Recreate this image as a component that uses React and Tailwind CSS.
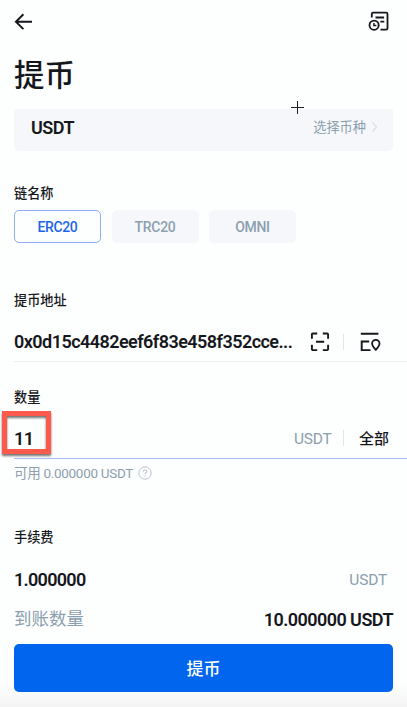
const NETWORKS = [
  { name: "ERC20", active: true },
  { name: "TRC20", active: false },
  { name: "OMNI", active: false },
];

function BackIcon() {
  return (
    <svg width="20" height="20" viewBox="0 0 20 20" fill="none" stroke="#15171c" strokeWidth="1.9">
      <path d="M9.4 2.3 1.9 9.7l7.5 7.5M2.1 9.700H18" />
    </svg>
  );
}

function HistoryIcon() {
  return (
    <svg width="22" height="22" viewBox="0 0 22 22" fill="none" stroke="#15171c" strokeWidth="1.8">
      <path d="M3.8 6.5V3q0-1.4 1.4-1.4h12.900q1.400 0 1.400 1.400v14.200q0 1.400-1.400 1.400h-5.600" />
      <path d="M7.500 6.500h8.600M12.300 10.700h4" />
      <circle cx="6.100" cy="14.200" r="4.600" />
      <path d="M5.900 11.900v2.600h2.500" strokeWidth="1.400" />
    </svg>
  );
}

function ScanIcon() {
  return (
    <svg width="20" height="20" viewBox="0 0 20 20" fill="none" stroke="#15171c" strokeWidth="1.900">
      <path d="M7.200 1.500H2.900q-1 0-1 1v4.300M12.800 1.500h4.300q1 0 1 1v4.300M18.100 12.800v4.300q0 1-1 1h-4.300M7.200 18.100H2.900q-1 0-1-1v-4.300M6 9.700h8.200" />
    </svg>
  );
}

function AddressBookIcon() {
  return (
    <svg width="22" height="20" viewBox="0 0 22 20" fill="none" stroke="#15171c" strokeWidth="1.900">
      <path d="M1.800 1.700h17.600M10.200 9.500H2.700v8.600h8.800" />
      <path d="M16.800 17.800c-2-2.100-3.700-4-3.700-6.300a3.700 3.700 0 0 1 7.400 0c0 2.300-1.700 4.200-3.700 6.300z" strokeWidth="1.800" />
    </svg>
  );
}

function HelpIcon() {
  return (
    <svg width="14" height="14" viewBox="0 0 14 14" fill="none" stroke="#bdc3cc" strokeWidth="1">
      <circle cx="7" cy="7" r="6.200" />
      <path d="M5.300 5.700c0-2.300 3.500-2.300 3.500-.2C8.800 6.700 7 6.700 7 8.300M7 9.400v1.100" strokeWidth="1.100" />
    </svg>
  );
}

function Label({ children }) {
  return <div className="h-5 text-[13.2px] leading-5 font-medium">{children}</div>;
}

export default function App() {
  return (
    <div className="relative h-[707px] w-[407px] overflow-hidden bg-[#fdfefe] pl-[14px] font-[Roboto,'Noto_Sans_CJK_SC',sans-serif] text-[#15171c]">
      <header className="flex h-[43px] items-center justify-between pr-[17px]">
        <BackIcon />
        <HistoryIcon />
      </header>

      <h1 className="mt-[11px] h-[44px] text-[30.4px] leading-[44px] font-medium">提币</h1>

      <section className="mt-[11px] mr-[14px] flex h-[42px] items-center justify-between rounded-b-[5px] bg-[#f6f7fb] pr-[15px] pb-[5px] pl-[17px]">
        <span className="text-[18px] font-semibold tracking-[-0.5px]">USDT</span>
        <div className="flex items-center gap-[5px] text-[13.2px] text-[#8c9fad]">
          选择币种
          <svg width="7" height="12" viewBox="0 0 7 12" fill="none" stroke="#dadee5" strokeWidth="1.2">
            <path d="m1.500 1.500 4 4.500-4 4.500" />
          </svg>
        </div>
      </section>

      <div className="mt-[33px]">
        <Label>链名称</Label>
      </div>
      <div className="mt-[6px] flex gap-[10.5px]">
        {NETWORKS.map((n) => (
          <button
            key={n.name}
            className={
              n.active
                ? "h-[33px] w-[87px] rounded-[5px] border border-[#8fadf8] pt-px text-[14px] font-medium tracking-[-0.4px] text-[#1c65ea]"
                : "h-[33px] w-[87px] rounded-[5px] bg-[#f6f7fb] pt-px text-[14px] font-medium tracking-[-0.3px] text-[#8c9fad]"
            }
          >
            {n.name}
          </button>
        ))}
      </div>

      <div className="mt-[48px]">
        <Label>提币地址</Label>
      </div>
      <div className="mt-[11px] flex h-[40px] items-center border-b border-[#eceff1]">
        <span className="w-[280px] text-[18px] font-semibold tracking-[-0.54px] whitespace-nowrap">0x0d15c4482eef6f83e458f352cce...</span>
        <span className="ml-[16px]"><ScanIcon /></span>
        <span className="ml-[13px] h-4 w-px bg-[#e2e5e8]" />
        <span className="ml-[15px]"><AddressBookIcon /></span>
      </div>

      <div className="mt-[26px]">
        <Label>数量</Label>
      </div>
      <div className="mt-[9px] flex h-[42px] items-center border-b border-[#a5baf9] pt-px">
        <span className="w-[280px] text-[18px] font-semibold tracking-[-0.5px]">11</span>
        <span className="w-[38px] pt-[3px] text-[15.5px] tracking-[-0.2px] text-[#8c9fad]">USDT</span>
        <span className="ml-[11px] h-4 w-px bg-[#e2e5e8]" />
        <span className="ml-[15px] pt-[2px] text-[15px] font-medium">全部</span>
      </div>
      <div className="mt-[4px] flex h-5 items-center gap-[5px] text-[13.5px] tracking-[-0.3px] text-[#8c9fad]">
        <span>可用 0.000000 USDT</span>
        <HelpIcon />
      </div>

      <div className="mt-[45px]">
        <Label>手续费</Label>
      </div>
      <div className="mt-[19px] flex h-6 items-center justify-between pr-[20px]">
        <span className="text-[18px] font-semibold tracking-[-0.7px]">1.000000</span>
        <span className="pt-[3px] text-[15.5px] tracking-[-0.2px] text-[#8c9fad]">USDT</span>
      </div>
      <div className="mt-[16px] flex h-6 items-center justify-between pr-[14px]">
        <span className="text-[17.5px] text-[#8c9fad]">到账数量</span>
        <span className="text-[18px] font-semibold tracking-[-0.55px]">10.000000 USDT</span>
      </div>
      <div className="mt-[13px] -ml-[14px] h-[64px] bg-linear-to-b from-[#fdfefe] from-60% to-[#f4f4f5] px-[14px]">
        <button className="h-12 w-full rounded-[5px] bg-[#0265ed] pt-[3px] text-[17px] font-medium text-white">提币</button>
      </div>

      <svg className="absolute top-[101px] left-[291px]" width="13" height="13" viewBox="0 0 13 13" stroke="#222" strokeWidth="1">
        <path d="M6.500 0v13M0 6.500h13" />
      </svg>
      <div className="absolute top-[411px] left-[2px] h-[43px] w-[49px] border-[5px] border-[#fc5a4c] drop-shadow-[0_2px_1px_rgba(0,0,0,0.55)]" />
    </div>
  );
}
